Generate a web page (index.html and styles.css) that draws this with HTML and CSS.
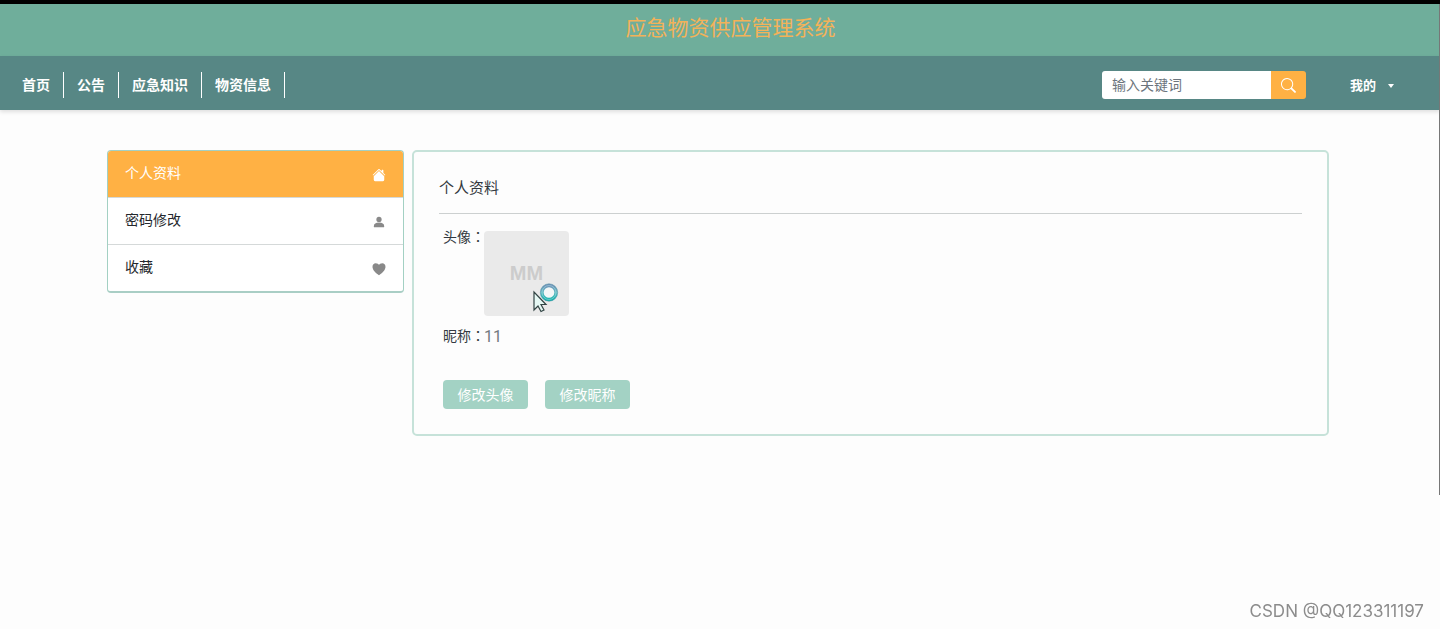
FILE: index.html
```html
<!DOCTYPE html>
<html lang="zh-CN">
<head>
<meta charset="utf-8">
<title>应急物资供应管理系统</title>
<link rel="stylesheet" href="styles.css">
</head>
<body>
<header>
  <div class="banner"><h1 class="banner-title">应急物资供应管理系统</h1></div>
  <div class="navbar">
    <nav class="nav-links">
      <a href="#">首页</a>
      <a href="#">公告</a>
      <a href="#">应急知识</a>
      <a href="#">物资信息</a>
    </nav>
    <form class="search">
      <input class="search-input" type="text" placeholder="输入关键词" aria-label="输入关键词">
      <button class="search-button" type="button" aria-label="搜索">
        <svg width="15" height="15" viewBox="0 0 16 16" fill="currentColor"><path d="M11.742 10.344a6.5 6.5 0 1 0-1.397 1.398l3.85 3.85a1 1 0 0 0 1.415-1.414l-3.868-3.834zM12 6.5a5.5 5.5 0 1 1-11 0 5.5 5.5 0 0 1 11 0z"/></svg>
      </button>
    </form>
    <button class="account" type="button">我的<span class="caret"></span></button>
  </div>
</header>
<main class="content">
  <nav class="side-menu">
    <a class="side-item active" href="#">个人资料
      <svg width="14" height="14" viewBox="0 0 16 16" fill="currentColor"><path d="M8 3.300l6 6V13.500a1.500 1.500 0 0 1-1.500 1.500h-9A1.500 1.500 0 0 1 2 13.500V9.300z"/><path d="M7.300 1.500a1 1 0 0 1 1.400 0L11 3.800V2.500a.5.5 0 0 1 .5-.5h1a.5.5 0 0 1 .5.5v3.300l2.300 2.200-.7.700L8 2.200 1.400 8.700.7 8z"/></svg>
    </a>
    <a class="side-item" href="#">密码修改
      <svg width="14" height="14" viewBox="0 0 16 16" fill="currentColor"><circle cx="8" cy="5" r="3"/><path d="M2 13c0-3 2.500-4.300 6-4.300s6 1.300 6 4.300c0 .7-.4 1-1 1H3c-.6 0-1-.3-1-1z"/></svg>
    </a>
    <a class="side-item" href="#">收藏
      <svg width="14" height="14" viewBox="0 0 16 16" fill="currentColor"><path d="M8 15C-2.500 8.300 0 1.300 4.200 1.300 6.200 1.300 7.400 2.200 8 3.300c.6-1.100 1.800-2 3.800-2C16 1.300 18.500 8.300 8 15z"/></svg>
    </a>
  </nav>
  <section class="panel">
    <h2 class="panel-title">个人资料</h2>
    <div class="profile">
      <div class="field">
        <span class="label">头像<span class="colon" lang="zh-TW">：</span></span>
        <div class="avatar">MM
          <svg class="pointer" width="28" height="32" viewBox="0 0 28 32">
            <defs><linearGradient id="ring" x1="0" y1="0" x2="0" y2="1"><stop offset="0" stop-color="#6f91b8"/><stop offset=".5" stop-color="#62bcc4"/><stop offset="1" stop-color="#16b3ae"/></linearGradient></defs>
            <circle cx="17" cy="10.500" r="7" fill="#f3f7f7" stroke="url(#ring)" stroke-width="3.400"/>
            <circle cx="17" cy="10.500" r="8.700" fill="none" stroke="#4b8fa0" stroke-width=".5"/>
            <circle cx="17" cy="10.500" r="7" fill="none" stroke="#b9e6e6" stroke-opacity=".6" stroke-width=".8"/>
            <path d="M2 10v18l4-4 3 5.500 3-1.500-3-5.500h5z" fill="#e6f8f4" stroke="#344" stroke-width="1.200"/>
          </svg>
        </div>
      </div>
      <div class="field nickname"><span class="label">昵称<span class="colon" lang="zh-TW">：</span></span><span class="value">11</span></div>
      <div class="actions">
        <button class="action" type="button">修改头像</button>
        <button class="action" type="button">修改昵称</button>
      </div>
    </div>
  </section>
</main>
<div class="scroll-thumb"></div>
<div class="watermark">CSDN @QQ123311197</div>
</body>
</html>
```
FILE: styles.css
```css
* { box-sizing: border-box; }
body {
  margin: 0;
  background: #fdfdfd;
  color: #333940;
  font: 14px/20px "Liberation Sans", "Noto Sans CJK SC", sans-serif;
}
a { color: inherit; text-decoration: none; }
button, input { font: inherit; border: 0; padding: 0; margin: 0; }
button { cursor: pointer; }
h1, h2 { margin: 0; font-weight: 400; }
svg { display: block; }

.banner {
  height: 56px;
  border-top: 4px solid #000;
  background: #6fae9b;
  text-align: center;
}
.banner-title { padding-top: 9px; padding-left: 21px; font-size: 21px; line-height: 30px; color: #f3b259; }

.navbar {
  display: flex;
  align-items: center;
  height: 54px;
  padding: 4px 46px 0 9px;
  background: #578785;
  color: #fff;
  box-shadow: 0 2px 4px rgba(0, 0, 0, .12);
}
.nav-links { display: flex; margin-right: auto; font-weight: 700; }
.nav-links a { padding: 0 13px; border-right: 1px solid #fff; line-height: 26px; }

.search { display: flex; height: 28px; }
.search-input {
  width: 169px;
  padding: 0 10px;
  border-radius: 3px 0 0 3px;
  background: #fff;
  color: #495057;
  outline: 0;
}
.search-input::placeholder { color: #6c757d; opacity: 1; }
.search-button {
  display: grid;
  place-items: center;
  width: 35px;
  border-radius: 0 3px 3px 0;
  background: #ffb144;
  color: #fff;
}
.account {
  display: flex;
  align-items: center;
  gap: 12px;
  margin-left: 44px;
  padding-top: 2px;
  background: none;
  color: #fff;
  font-size: 13px;
  font-weight: 700;
}
.caret { border: 3px solid transparent; border-top: 4px solid #fff; border-bottom: 0; }

.content {
  display: grid;
  grid-template-columns: 297px 1fr;
  align-items: start;
  gap: 8px;
  padding: 40px 111px 40px 107px;
}
.side-menu {
  overflow: hidden;
  border: 1px solid #a3d0c3;
  border-bottom: 2px solid #a9cec5;
  border-radius: 4px;
  background: #fff;
}
.side-item {
  display: flex;
  align-items: center;
  justify-content: space-between;
  height: 47px;
  padding: 0 17px 2px;
  border-bottom: 1px solid #d5d9d9;
  color: #24282d;
}
.side-item:last-child { height: 46px; border-bottom: 0; }
.side-item svg { color: #898989; margin-top: 3px; }
.side-item.active, .side-item.active svg { color: #fff; }
.side-item.active { background: #ffb144; }

.panel {
  padding: 26px 25px 25px;
  border: 2px solid #c6e2d9;
  border-radius: 5px;
}
.panel-title {
  padding-bottom: 15px;
  border-bottom: 1px solid #ccd0d0;
  font-size: 15px;
  line-height: 20px;
}
.profile { padding: 17px 4px 0; }
.field { display: flex; align-items: flex-start; line-height: 12px; }
.label { width: 41px; white-space: nowrap; }
.colon { font-family: "Noto Sans CJK TC", sans-serif; line-height: 0; }
.avatar {
  position: relative;
  width: 85px;
  height: 85px;
  border-radius: 4px;
  background: #eaeaea;
  color: #ccc;
  font: 700 20px/85px "Liberation Sans", sans-serif;
  text-align: center;
}
.pointer { position: absolute; left: 48px; top: 51px; }
.nickname { margin-top: 14px; }
.value { color: #73797f; font: 16px/14px Roboto, sans-serif; }
.actions { display: flex; gap: 17px; margin-top: 36px; }
.action {
  width: 85px;
  height: 29px;
  border-radius: 4px;
  background: #a3d2c4;
  color: #fff;
}

.scroll-thumb { position: fixed; top: 4px; right: 0; width: 1px; height: 78%; background: #777; }
.watermark {
  position: fixed;
  right: 16px;
  bottom: 8px;
  color: #8c8c8c;
  font: 17px/20px Inter, sans-serif;
}
```
